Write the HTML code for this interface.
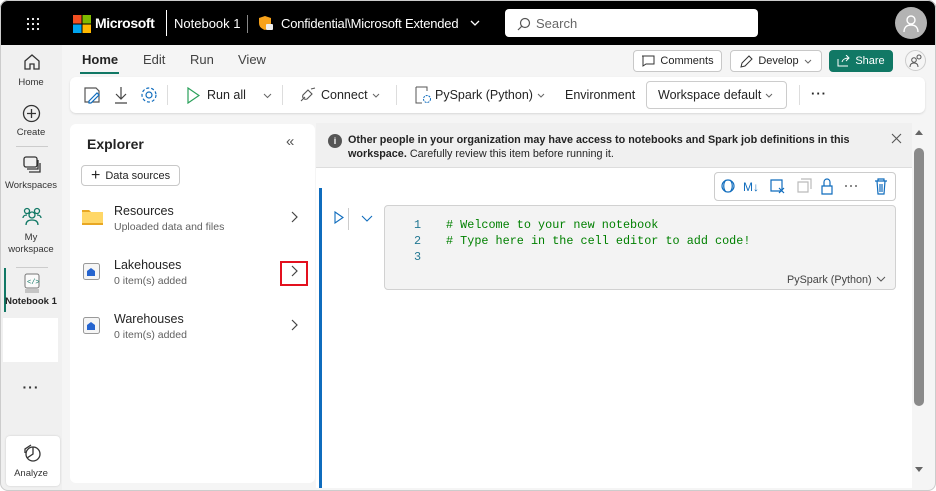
<!DOCTYPE html>
<html><head><meta charset="utf-8"><style>
*{box-sizing:border-box;margin:0;padding:0}
body{width:936px;height:491px;background:#fff;font-family:"Liberation Sans",sans-serif;color:#242424;position:relative;overflow:hidden;font-size:12px}
.abs{position:absolute}
.frame{position:absolute;left:0;top:0;width:936px;height:491px;border-radius:8px;overflow:hidden;background:#f5f5f5}
.top{position:absolute;left:0;top:0;width:936px;height:45px;background:#000;color:#fff}
.nav{position:absolute;left:0;top:45px;width:62px;height:446px;background:#f0f0f0}
.ni{position:absolute;width:62px;text-align:center;font-size:9.5px;color:#333}
.btn{position:absolute;border:1px solid #c8c8c8;border-radius:4px;background:#fff;font-size:11px;display:flex;align-items:center;justify-content:center;gap:5px}
.tb{position:absolute;font-size:12.5px;color:#242424;top:88px;display:flex;align-items:center;gap:4px}
.ex{position:absolute;left:70px;top:124px;width:245px;height:359px;background:#fff;border-radius:6px}
.it .t{font-size:12.5px;color:#242424}.it .s{font-size:10.5px;color:#616161;margin-top:3px}
.code{font-family:"Liberation Mono",monospace;font-size:11.8px}
</style></head><body>
<div class="frame">
<div class="top">
 <svg class="abs" style="left:26px;top:17px" width="14" height="14"><g fill="#fff"><circle cx="2" cy="2" r="1.1"/><circle cx="7" cy="2" r="1.1"/><circle cx="12" cy="2" r="1.1"/><circle cx="2" cy="7" r="1.1"/><circle cx="7" cy="7" r="1.1"/><circle cx="12" cy="7" r="1.1"/><circle cx="2" cy="12" r="1.1"/><circle cx="7" cy="12" r="1.1"/><circle cx="12" cy="12" r="1.1"/></g></svg>
 <svg class="abs" style="left:73px;top:15px" width="18" height="18"><rect width="8.5" height="8.5" fill="#f25022"/><rect x="9.5" width="8.5" height="8.5" fill="#7fba00"/><rect y="9.5" width="8.5" height="8.5" fill="#00a4ef"/><rect x="9.5" y="9.5" width="8.5" height="8.5" fill="#ffb900"/></svg>
 <div class="abs" style="left:95px;top:15px;font-size:14px;font-weight:bold;letter-spacing:-.4px">Microsoft</div>
 <div class="abs" style="left:166px;top:10px;width:1px;height:26px;background:#fff"></div>
 <div class="abs" style="left:174px;top:16px;font-size:13px">Notebook 1</div>
 <div class="abs" style="left:247px;top:15px;width:1px;height:18px;background:#888"></div>
 <svg class="abs" style="left:258px;top:15px" width="16" height="17"><path d="M7 1l6 2v5c0 4-3 6-6 7-3-1-6-3-6-7V3z" fill="#f7a21b"/><rect x="8" y="9" width="7" height="6" rx="1" fill="#eee"/></svg>
 <div class="abs" style="left:281px;top:16px;font-size:13px;letter-spacing:-.2px">Confidential\Microsoft Extended</div>
 <svg class="abs" style="left:470px;top:19px" width="10" height="8"><path d="M1 2l4 4 4-4" stroke="#fff" fill="none" stroke-width="1.3"/></svg>
 <div class="abs" style="left:505px;top:9px;width:253px;height:28px;background:#fff;border-radius:4px"></div>
 <svg class="abs" style="left:517px;top:17px" width="14" height="14"><circle cx="8" cy="6" r="4.5" stroke="#555" fill="none" stroke-width="1.2"/><path d="M5 9L1 13" stroke="#555" stroke-width="1.2"/></svg>
 <div class="abs" style="left:536px;top:16px;font-size:13px;color:#666">Search</div>
 <div class="abs" style="left:895px;top:7px;width:32px;height:32px;border-radius:50%;background:#b3b3b3"></div>
 <svg class="abs" style="left:901px;top:13px" width="20" height="20"><circle cx="10" cy="7" r="4" stroke="#fff" fill="none" stroke-width="1.4"/><path d="M3 19c0-5 3-7 7-7s7 2 7 7" stroke="#fff" fill="none" stroke-width="1.4"/></svg>
</div>
<div class="nav">
 <svg class="abs" style="left:23px;top:8px" width="18" height="18"><path d="M2 8l7-6 7 6v8h-5v-5H7v5H2z" stroke="#333" fill="none" stroke-width="1.3"/></svg>
 <div class="ni" style="top:32px">Home</div>
 <svg class="abs" style="left:22px;top:59px" width="19" height="19"><circle cx="9.5" cy="9.5" r="8" stroke="#333" fill="none" stroke-width="1.3"/><path d="M9.5 5v9M5 9.5h9" stroke="#333" stroke-width="1.3"/></svg>
 <div class="ni" style="top:82px">Create</div>
 <div class="abs" style="left:16px;top:101px;width:32px;height:1px;background:#ccc"></div>
 <svg class="abs" style="left:23px;top:111px" width="20" height="18"><rect x="1" y="1" width="13" height="10" rx="2" stroke="#333" fill="none" stroke-width="1.3"/><path d="M4 13h11V4M6 16h11V7" stroke="#333" fill="none" stroke-width="1.3"/></svg>
 <div class="ni" style="top:135px">Workspaces</div>
 <svg class="abs" style="left:22px;top:162px" width="20" height="20"><g stroke="#117865" fill="none" stroke-width="1.3"><circle cx="5" cy="4" r="2.5"/><circle cx="15" cy="4" r="2.5"/><circle cx="10" cy="8" r="3"/><path d="M1 11c0-2 2-3 4-3M19 11c0-2-2-3-4-3M4 18c0-4 3-5 6-5s6 1 6 5"/></g></svg>
 <div class="ni" style="top:187px;line-height:12px">My<br>workspace</div>
 <div class="abs" style="left:16px;top:222px;width:32px;height:1px;background:#ccc"></div>
 <div class="abs" style="left:4px;top:223px;width:2px;height:44px;background:#117865"></div>
 <svg class="abs" style="left:24px;top:228px" width="16" height="20"><rect x="1" y="1" width="14" height="14" rx="2" stroke="#777" fill="#fafafa"/><path d="M1 17h14M1 19h14" stroke="#999"/><text x="3" y="11" font-size="7" fill="#117865" font-family="Liberation Mono">&lt;/&gt;</text></svg>
 <div class="ni" style="top:251px;font-weight:bold;color:#242424;font-size:9.5px">Notebook 1</div>
 <div class="abs" style="left:3px;top:273px;width:55px;height:44px;background:#fff"></div>
 <div class="ni" style="top:334px;font-size:14px;letter-spacing:1px;font-weight:bold">···</div>
 <div class="abs" style="left:6px;top:391px;width:54px;height:50px;background:#fff;border-radius:4px;box-shadow:0 0 2px rgba(0,0,0,.15)"></div>
 <svg class="abs" style="left:22px;top:399px" width="20" height="18"><circle cx="11" cy="10" r="7" stroke="#333" fill="none" stroke-width="1.3"/><path d="M11 3v7l-6 4M9 1L3 5v4" stroke="#333" fill="none" stroke-width="1.3"/></svg>
 <div class="ni" style="top:423px">Analyze</div>
</div>
<div class="abs" style="left:82px;top:52px;font-size:13px;font-weight:bold;color:#242424">Home</div>
<div class="abs" style="left:80px;top:72px;width:39px;height:2px;background:#117865"></div>
<div class="abs" style="left:143px;top:52px;font-size:13px;color:#424242">Edit</div>
<div class="abs" style="left:190px;top:52px;font-size:13px;color:#424242">Run</div>
<div class="abs" style="left:238px;top:52px;font-size:13px;color:#424242">View</div>
<div class="btn" style="left:633px;top:50px;width:89px;height:22px"><svg width="14" height="12"><path d="M1 1h12v8H5l-3 2V1z" stroke="#333" fill="none"/></svg>Comments</div>
<div class="btn" style="left:730px;top:50px;width:92px;height:22px"><svg width="13" height="13"><path d="M1 12l1-4 7-7 3 3-7 7z" stroke="#333" fill="none"/></svg>Develop <svg width="8" height="5"><path d="M1 1l3 3 3-3" stroke="#666" fill="none"/></svg></div>
<div class="btn" style="left:829px;top:50px;width:64px;height:22px;background:#117865;border-color:#117865;color:#fff"><svg width="13" height="12"><path d="M1 4v7h10M5 7c1-3 3-4 7-4M9 0l3 3-3 3" stroke="#fff" fill="none"/></svg>Share</div>
<div class="abs" style="left:905px;top:50px;width:21px;height:21px;border:1px solid #ccc;border-radius:50%;background:#f5f5f5"></div>
<svg class="abs" style="left:909px;top:54px" width="14" height="13"><circle cx="5" cy="6" r="2.3" stroke="#555" fill="none"/><circle cx="10" cy="3" r="2" stroke="#555" fill="none"/><path d="M1 13c0-3 2-4 4-4s4 1 4 4" stroke="#555" fill="none"/></svg>
<div class="abs" style="left:70px;top:77px;width:855px;height:36px;background:#fff;border-radius:6px;box-shadow:0 1px 2px rgba(0,0,0,.12)"></div>
<svg class="abs" style="left:83px;top:86px" width="18" height="18"><path d="M2 2h11l3 3v11H2z" stroke="#555" fill="none" stroke-width="1.2"/><path d="M6 15l8-8 2 2-8 8H6z" stroke="#0f6cbd" fill="#fff" stroke-width="1.2"/></svg>
<svg class="abs" style="left:114px;top:86px" width="14" height="18"><path d="M7 1v12M2 8l5 5 5-5M1 17h12" stroke="#444" fill="none" stroke-width="1.2"/></svg>
<svg class="abs" style="left:140px;top:86px" width="18" height="18"><circle cx="9" cy="9" r="3" stroke="#0f6cbd" fill="none" stroke-width="1.2"/><circle cx="9" cy="9" r="7" stroke="#0f6cbd" fill="none" stroke-width="1.2" stroke-dasharray="3 2"/></svg>
<div class="abs" style="left:167px;top:85px;width:1px;height:20px;background:#ddd"></div>
<svg class="abs" style="left:186px;top:87px" width="14" height="17"><path d="M2 1l11 7.5L2 16z" stroke="#2aa05a" fill="none" stroke-width="1.2"/></svg>
<div class="tb" style="left:207px">Run all</div>
<svg class="abs" style="left:263px;top:93px" width="9" height="6"><path d="M1 1l3.5 3.5L8 1" stroke="#666" fill="none"/></svg>
<div class="abs" style="left:282px;top:85px;width:1px;height:20px;background:#ddd"></div>
<svg class="abs" style="left:299px;top:87px" width="18" height="16"><path d="M2 14l4-4M12 2l4-1M8 12a3 3 0 0 1-4-4l5-5 4 4z" stroke="#555" fill="none" stroke-width="1.1"/></svg>
<div class="tb" style="left:321px">Connect <svg width="8" height="5"><path d="M1 1l3 3 3-3" stroke="#666" fill="none"/></svg></div>
<div class="abs" style="left:396px;top:85px;width:1px;height:20px;background:#ddd"></div>
<svg class="abs" style="left:414px;top:86px" width="18" height="18"><path d="M2 1h11v4M2 1v16h6" stroke="#555" fill="none"/><circle cx="13" cy="13" r="3.5" stroke="#0f6cbd" fill="none" stroke-dasharray="2 1"/></svg>
<div class="tb" style="left:435px">PySpark (Python) <svg width="8" height="5"><path d="M1 1l3 3 3-3" stroke="#666" fill="none"/></svg></div>
<div class="tb" style="left:565px">Environment</div>
<div class="abs" style="left:646px;top:81px;width:141px;height:28px;border:1px solid #ccc;border-radius:4px"></div>
<div class="tb" style="left:658px">Workspace default <svg width="8" height="5"><path d="M1 1l3 3 3-3" stroke="#666" fill="none"/></svg></div>
<div class="abs" style="left:799px;top:85px;width:1px;height:20px;background:#ddd"></div>
<div class="abs" style="left:811px;top:86px;font-size:13px;font-weight:bold;letter-spacing:1px">···</div>

<div class="ex">
 <div class="abs" style="left:17px;top:12px;font-size:14px;font-weight:bold;color:#242424">Explorer</div>
 <div class="abs" style="left:216px;top:9px;font-size:15px;color:#555">«</div>
 <div class="btn" style="left:11px;top:41px;width:99px;height:21px;justify-content:flex-start;padding-left:9px"><span style="font-size:16px;font-weight:300;line-height:10px">+</span>Data sources</div>
 <svg class="abs" style="left:12px;top:84px" width="21" height="18"><path d="M0 2h7l2 2h12v13H0z" fill="#ffd767"/><path d="M0 2h7l2 2H0z" fill="#e8a723"/><rect y="15" width="21" height="2" fill="#e8a723"/></svg>
 <div class="it abs" style="left:44px;top:80px"><div class="t">Resources</div><div class="s">Uploaded data and files</div></div>
 <svg class="abs" style="left:221px;top:87px" width="8" height="12"><path d="M1 1l5 5-5 5" stroke="#444" fill="none" stroke-width="1.2"/></svg>
 <svg class="abs" style="left:13px;top:139px" width="17" height="17"><rect x=".5" y=".5" width="16" height="16" rx="2" fill="#f5f5f5" stroke="#999"/><path d="M4 13V8l4-3 4 3v5z" fill="#2564cf"/></svg>
 <div class="it abs" style="left:44px;top:134px"><div class="t">Lakehouses</div><div class="s">0 item(s) added</div></div>
 <div class="abs" style="left:210px;top:137px;width:28px;height:25px;border:2px solid #e3101e"></div>
 <svg class="abs" style="left:221px;top:141px" width="8" height="12"><path d="M1 1l5 5-5 5" stroke="#444" fill="none" stroke-width="1.2"/></svg>
 <svg class="abs" style="left:13px;top:193px" width="17" height="17"><rect x=".5" y=".5" width="16" height="16" rx="2" fill="#f5f5f5" stroke="#999"/><path d="M4 13V8l4-3 4 3v5z" fill="#2564cf"/></svg>
 <div class="it abs" style="left:44px;top:188px"><div class="t">Warehouses</div><div class="s">0 item(s) added</div></div>
 <svg class="abs" style="left:221px;top:195px" width="8" height="12"><path d="M1 1l5 5-5 5" stroke="#444" fill="none" stroke-width="1.2"/></svg>
</div>

<div class="abs" style="left:316px;top:123px;width:596px;height:365px;background:#fff"></div>
<div class="abs" style="left:316px;top:123px;width:596px;height:45px;background:#f0f0f0;border-bottom:1px solid #ddd"></div>
<div class="abs" style="left:328px;top:134px;width:14px;height:14px;border-radius:50%;background:#555;color:#fff;font-size:9px;text-align:center;line-height:14px;font-weight:bold">i</div>
<div class="abs" style="left:348px;top:133px;font-size:10.8px;line-height:14px;width:520px"><b>Other people in your organization may have access to notebooks and Spark job definitions in this workspace.</b> Carefully review this item before running it.</div>
<svg class="abs" style="left:891px;top:133px" width="11" height="11"><path d="M1 1l9 9M10 1l-9 9" stroke="#555" stroke-width="1.1"/></svg>
<div class="abs" style="left:319px;top:188px;width:3px;height:300px;background:#0f6cbd"></div>
<div class="abs" style="left:714px;top:172px;width:182px;height:29px;border:1px solid #ccc;border-radius:4px;background:#fff"></div>
<svg class="abs" style="left:718px;top:176px" width="175" height="20" fill="none" stroke="#0f6cbd" stroke-width="1.2">
 <circle cx="10" cy="10" r="6"/><path d="M8 4c-3 3-3 9 0 12M12 4c3 3 3 9 0 12"/>
 <text x="25" y="15" font-size="12" fill="#0f6cbd" stroke="none" font-family="Liberation Sans">M↓</text>
 <path d="M53 4h11v11H53zM61 12l5 5M66 12l-5 5"/>
 <path d="M80 6h10v10H80zM83 3h10v10" stroke="#bbb"/>
 <path d="M104 10h10v8h-10zM106 10V6a3 3 0 0 1 6 0v4"/>
 <g fill="#666" stroke="none"><circle cx="128" cy="10" r="1"/><circle cx="133" cy="10" r="1"/><circle cx="138" cy="10" r="1"/></g>
 <path d="M157 5h12M160 5V3h6v2M159 5l1 13h6l1-13M162 8v8M164 8v8"/>
</svg>
<svg class="abs" style="left:334px;top:211px" width="10" height="13"><path d="M1 1l8 5.5L1 12z" stroke="#0f6cbd" fill="none" stroke-width="1.1"/></svg>
<div class="abs" style="left:348px;top:208px;width:1px;height:22px;background:#ccc"></div>
<svg class="abs" style="left:361px;top:215px" width="12" height="8"><path d="M1 1l5 5 5-5" stroke="#0f6cbd" fill="none" stroke-width="1.1"/></svg>
<div class="abs" style="left:384px;top:205px;width:512px;height:85px;background:#f3f3f3;border:1px solid #d1d1d1;border-radius:4px"></div>
<div class="abs code" style="left:414px;top:217px;line-height:16px;color:#237893">1<br>2<br>3</div>
<div class="abs code" style="left:446px;top:217px;line-height:16px;color:#008000">#&nbsp;Welcome to your new notebook<br># Type here in the cell editor to add code!</div>
<div class="abs" style="left:787px;top:274px;font-size:10.8px;color:#444">PySpark (Python)</div>
<svg class="abs" style="left:876px;top:276px" width="10" height="6"><path d="M1 1l4 4 4-4" stroke="#555" fill="none"/></svg>
<div class="abs" style="left:912px;top:123px;width:16px;height:365px;background:#f5f5f5"></div>
<div class="abs" style="left:914px;top:148px;width:10px;height:258px;background:#8a8a8a;border-radius:5px"></div>
<svg class="abs" style="left:915px;top:129px" width="8" height="6"><path d="M0 6l4-5 4 5z" fill="#666"/></svg>
<svg class="abs" style="left:915px;top:467px" width="8" height="6"><path d="M0 0l4 5 4-5z" fill="#666"/></svg>
</div>
<div class="abs" style="left:0;top:0;width:936px;height:491px;border:1px solid #ccc;border-radius:8px;pointer-events:none"></div>
</body></html>
